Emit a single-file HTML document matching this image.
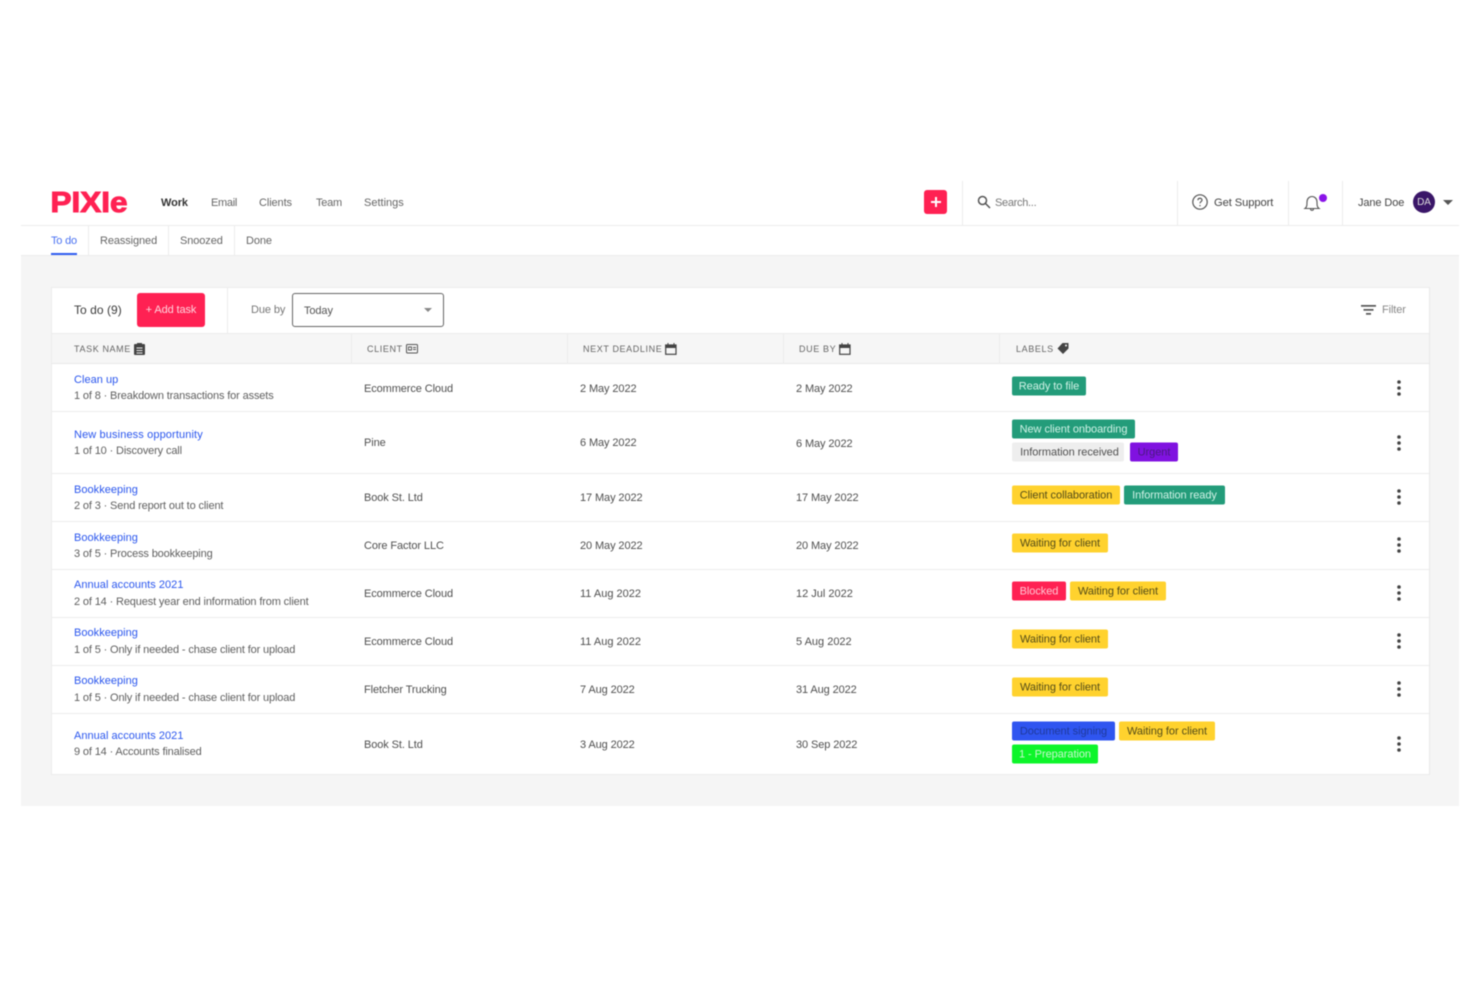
<!DOCTYPE html>
<html><head><meta charset="utf-8"><style>
html,body{margin:0;padding:0;background:#fff}
#p{position:relative;width:1480px;height:987px;overflow:hidden;background:#fff;font-family:"Liberation Sans",sans-serif;font-size:11px;letter-spacing:-.1px;color:#4f4f4f;filter:blur(.45px)}
.a{position:absolute}
.t{position:absolute;white-space:nowrap;transform:translateY(calc(-50% + 1px));line-height:14px}
.l{color:#2a56ee;letter-spacing:.03px}
.s{color:#606060;letter-spacing:-.14px}
.h{font-size:9px;letter-spacing:.62px;color:#666}
.b{position:absolute;height:19px;line-height:21px;border-radius:2px;text-align:center;font-size:11px;letter-spacing:-.05px;white-space:nowrap;transform:translateY(-50%)}
.y{background:#ffd22e;color:#544c18}.g{background:#239c7a;color:#d0f2e6}
.ln{position:absolute;background:#ececec}
svg{position:absolute;overflow:visible}
</style></head><body><div id="p">
<div class="a" style="left:21px;top:256px;width:1438px;height:550px;background:#f5f5f5"></div>
<div class="ln" style="left:21px;top:225px;width:1438px;height:1px"></div>
<div class="ln" style="left:21px;top:255px;width:1438px;height:1px"></div>
<svg style="left:48px;top:184px" width="84" height="36"><text x="2.500" y="28" font-family="Liberation Sans" font-weight="700" font-size="29" fill="#ff2153" textLength="77" lengthAdjust="spacingAndGlyphs" stroke="#ff2153" stroke-width="1" letter-spacing="0">PIXIe</text></svg>
<span class="t" style="left:161px;top:202px;font-weight:700;color:#333">Work</span>
<span class="t" style="left:211px;top:202px;color:#666;letter-spacing:-.3px">Email</span>
<span class="t" style="left:259px;top:202px;color:#666">Clients</span>
<span class="t" style="left:316px;top:202px;color:#666;letter-spacing:-.25px">Team</span>
<span class="t" style="left:364px;top:202px;color:#666;letter-spacing:0">Settings</span>
<div class="a" style="left:924px;top:190px;width:23px;height:24px;background:#ff2153;border-radius:3px"></div>
<div class="a" style="left:931px;top:201px;width:10px;height:2px;background:#fff"></div>
<div class="a" style="left:935px;top:197px;width:2px;height:10px;background:#fff"></div>
<div class="ln" style="left:962px;top:181px;width:1px;height:44px"></div>
<svg style="left:977px;top:195px" width="14" height="14" fill="none" stroke="#555" stroke-width="1.5"><circle cx="5.5" cy="5.5" r="4"/><path d="M8.500 8.500L13 13"/></svg>
<span class="t" style="left:995px;top:202px;color:#777;letter-spacing:-.3px">Search...</span>
<div class="ln" style="left:1177px;top:181px;width:1px;height:44px"></div>
<svg style="left:1192px;top:194px" width="16" height="16" fill="none" stroke="#555" stroke-width="1.2"><circle cx="8" cy="8" r="7.200"/><path d="M5.900 6.200C6 3.600 10 3.600 10 6.100C10 7.600 8 7.600 8 9.400M8 11v1.300"/></svg>
<span class="t" style="left:1214px;top:202px;color:#444;font-size:11.2px">Get Support</span>
<div class="ln" style="left:1288px;top:181px;width:1px;height:44px"></div>
<svg style="left:1304px;top:195px" width="17" height="17" fill="none" stroke="#555" stroke-width="1.100"><path d="M1 13.500C3 12 3 10 3 7C3 3.500 5.500 1.500 8 1.500C10.500 1.500 13 3.500 13 7C13 10 13 12 15 13.500ZM6.500 13.500C6.500 16 9.500 16 9.500 13.500"/></svg>
<div class="a" style="left:1319px;top:194px;width:8px;height:8px;border-radius:50%;background:#8a14e8"></div>
<div class="ln" style="left:1342px;top:181px;width:1px;height:44px"></div>
<span class="t" style="left:1358px;top:202px;color:#444;font-size:11px">Jane Doe</span>
<div class="a" style="left:1413px;top:191px;width:22px;height:22px;border-radius:50%;background:#3a1668;color:#ddd;font-size:10px;line-height:23px;text-align:center">DA</div>
<div class="a" style="left:1443px;top:200px;width:0;height:0;border:5px solid transparent;border-top:5px solid #555;border-bottom:0"></div>

<span class="t" style="left:51px;top:240px;color:#4a72f2;letter-spacing:-.2px">To do</span>
<div class="a" style="left:51px;top:253px;width:26px;height:2px;background:#2f5cf0"></div>
<div class="ln" style="left:88px;top:226px;width:1px;height:29px"></div>
<span class="t" style="left:100px;top:240px;color:#666">Reassigned</span>
<div class="ln" style="left:168px;top:226px;width:1px;height:29px"></div>
<span class="t" style="left:180px;top:240px;color:#666">Snoozed</span>
<div class="ln" style="left:234px;top:226px;width:1px;height:29px"></div>
<span class="t" style="left:246px;top:240px;color:#666">Done</span>

<div class="a" style="left:51px;top:287px;width:1377px;height:486px;background:#fff;border:1px solid #ececec;border-right-color:#e8e8e8"></div>
<span class="t" style="left:74px;top:309px;font-size:12px;letter-spacing:.05px;color:#3c3c3c">To do (9)</span>
<div class="a" style="left:137px;top:293px;width:68px;height:34px;background:#ff2153;border-radius:3px;color:#ffd5de;line-height:35px;text-align:center;font-size:11px">+ Add task</div>
<div class="ln" style="left:227px;top:288px;width:1px;height:45px"></div>
<span class="t" style="left:251px;top:309px;color:#777">Due by</span>
<div class="a" style="left:292px;top:293px;width:150px;height:32px;border:1px solid #666;border-radius:3px;background:#fff"></div>
<span class="t" style="left:304px;top:310px;color:#555">Today</span>
<div class="a" style="left:424px;top:308px;width:0;height:0;border:4.500px solid transparent;border-top:4px solid #888;border-bottom:0"></div>
<svg style="left:1361px;top:305px" width="16" height="11" fill="#555"><rect width="15" height="1.700" y="0"/><rect x="2.500" width="10" height="1.700" y="4"/><rect x="5" width="5" height="1.700" y="8"/></svg>
<span class="t" style="left:1382px;top:309px;color:#888">Filter</span>

<div class="a" style="left:52px;top:333px;width:1377px;height:31px;background:#f6f6f6;border-top:1px solid #ececec;box-sizing:border-box;border-bottom:1px solid #e8e8e8"></div>
<div class="ln" style="left:351px;top:334px;width:1px;height:30px"></div>
<div class="ln" style="left:567px;top:334px;width:1px;height:30px"></div>
<div class="ln" style="left:783px;top:334px;width:1px;height:30px"></div>
<div class="ln" style="left:999px;top:334px;width:1px;height:30px"></div>
<span class="t h" style="left:74px;top:348px">TASK NAME</span>
<svg style="left:134px;top:343px" width="11" height="12"><rect x="0" y="1" width="11" height="11" rx="1" fill="#444"/><rect x="3" y="0" width="5" height="2" fill="#444"/><path d="M2.500 5h6M2.500 7.500h6M2.500 10h6" stroke="#f0f0f0"/></svg>
<span class="t h" style="left:367px;top:348px">CLIENT</span>
<svg style="left:406px;top:344px" width="12" height="10" fill="none" stroke="#555"><rect x=".5" y=".5" width="11" height="8.500" rx="1"/><path d="M2.500 3h3v3h-3zM7 3.500h3M7 5.500h3" stroke-width=".9"/></svg>
<span class="t h" style="left:583px;top:348px">NEXT DEADLINE</span>
<svg style="left:665px;top:343px" width="12" height="12" fill="none" stroke="#444"><rect x=".7" y="2" width="10.300" height="9.300" stroke-width="1.200"/><rect x=".7" y="2" width="10.300" height="2.500" fill="#444"/><path d="M3 0v2M9 0v2"/></svg>
<span class="t h" style="left:799px;top:348px">DUE BY</span>
<svg style="left:839px;top:343px" width="12" height="12" fill="none" stroke="#444"><rect x=".7" y="2" width="10.300" height="9.300" stroke-width="1.200"/><rect x=".7" y="2" width="10.300" height="2.500" fill="#444"/><path d="M3 0v2M9 0v2"/></svg>
<span class="t h" style="left:1016px;top:348px">LABELS</span>
<svg style="left:1057px;top:342px" width="12" height="12"><path d="M5.500 1L11.500 1V6.500L6 12L.5 6.500Z" fill="#444"/><circle cx="9" cy="3.500" r="1" fill="#f6f6f6"/></svg>

<div class="ln" style="left:52px;top:411px;width:1377px;height:1px"></div>
<div class="ln" style="left:52px;top:473px;width:1377px;height:1px"></div>
<div class="ln" style="left:52px;top:521px;width:1377px;height:1px"></div>
<div class="ln" style="left:52px;top:569px;width:1377px;height:1px"></div>
<div class="ln" style="left:52px;top:617px;width:1377px;height:1px"></div>
<div class="ln" style="left:52px;top:665px;width:1377px;height:1px"></div>
<div class="ln" style="left:52px;top:713px;width:1377px;height:1px"></div>

<span class="t l" style="left:74px;top:379px">Clean up</span><span class="t s" style="left:74px;top:395px">1 of 8 · Breakdown transactions for assets</span>
<span class="t" style="left:364px;top:387.500px">Ecommerce Cloud</span><span class="t" style="left:580px;top:387.500px">2 May 2022</span><span class="t" style="left:796px;top:387.500px">2 May 2022</span>
<div class="b g" style="left:1012px;top:386px;width:74px">Ready to file</div>

<span class="t l" style="left:74px;top:434px;letter-spacing:.12px">New business opportunity</span><span class="t s" style="left:74px;top:450px">1 of 10 · Discovery call</span>
<span class="t" style="left:364px;top:441.500px">Pine</span><span class="t" style="left:580px;top:441.500px">6 May 2022</span><span class="t" style="left:796px;top:442.500px">6 May 2022</span>
<div class="b g" style="left:1012px;top:429px;width:123px">New client onboarding</div>
<div class="b" style="left:1012px;top:452px;width:112px;background:#eee;color:#505050;text-indent:3px">Information received</div>
<div class="b" style="left:1130px;top:452px;width:48px;background:#8012e0;color:#4a1a80">Urgent</div>

<span class="t l" style="left:74px;top:489px">Bookkeeping</span><span class="t s" style="left:74px;top:505px">2 of 3 · Send report out to client</span>
<span class="t" style="left:364px;top:496.500px">Book St. Ltd</span><span class="t" style="left:580px;top:496.500px">17 May 2022</span><span class="t" style="left:796px;top:496.500px">17 May 2022</span>
<div class="b y" style="left:1012px;top:495px;width:108px">Client collaboration</div>
<div class="b g" style="left:1124px;top:495px;width:101px">Information ready</div>

<span class="t l" style="left:74px;top:537px">Bookkeeping</span><span class="t s" style="left:74px;top:553px">3 of 5 · Process bookkeeping</span>
<span class="t" style="left:364px;top:544.500px">Core Factor LLC</span><span class="t" style="left:580px;top:544.500px">20 May 2022</span><span class="t" style="left:796px;top:544.500px">20 May 2022</span>
<div class="b y" style="left:1012px;top:543px;width:96px">Waiting for client</div>

<span class="t l" style="left:74px;top:584px">Annual accounts 2021</span><span class="t s" style="left:74px;top:601px">2 of 14 · Request year end information from client</span>
<span class="t" style="left:364px;top:592.500px">Ecommerce Cloud</span><span class="t" style="left:580px;top:592.500px;letter-spacing:0">11 Aug 2022</span><span class="t" style="left:796px;top:592.500px;letter-spacing:0">12 Jul 2022</span>
<div class="b" style="left:1012px;top:591px;width:54px;background:#ff2153;color:#ffc4d2">Blocked</div>
<div class="b y" style="left:1070px;top:591px;width:96px">Waiting for client</div>

<span class="t l" style="left:74px;top:632px">Bookkeeping</span><span class="t s" style="left:74px;top:649px">1 of 5 · Only if needed - chase client for upload</span>
<span class="t" style="left:364px;top:640.500px">Ecommerce Cloud</span><span class="t" style="left:580px;top:640.500px;letter-spacing:0">11 Aug 2022</span><span class="t" style="left:796px;top:640.500px;letter-spacing:0">5 Aug 2022</span>
<div class="b y" style="left:1012px;top:639px;width:96px">Waiting for client</div>

<span class="t l" style="left:74px;top:680px">Bookkeeping</span><span class="t s" style="left:74px;top:697px">1 of 5 · Only if needed - chase client for upload</span>
<span class="t" style="left:364px;top:688.500px">Fletcher Trucking</span><span class="t" style="left:580px;top:688.500px">7 Aug 2022</span><span class="t" style="left:796px;top:688.500px">31 Aug 2022</span>
<div class="b y" style="left:1012px;top:687px;width:96px">Waiting for client</div>

<span class="t l" style="left:74px;top:735px">Annual accounts 2021</span><span class="t s" style="left:74px;top:751px">9 of 14 · Accounts finalised</span>
<span class="t" style="left:364px;top:743.500px">Book St. Ltd</span><span class="t" style="left:580px;top:743.500px">3 Aug 2022</span><span class="t" style="left:796px;top:743.500px">30 Sep 2022</span>
<div class="b" style="left:1012px;top:731px;width:103px;background:#2f55f0;color:#1f3a9c">Document signing</div>
<div class="b y" style="left:1119px;top:731px;width:96px">Waiting for client</div>
<div class="b" style="left:1012px;top:754px;width:86px;background:#0df52a;color:#c8f7cf">1 - Preparation</div>

<svg style="left:1396px;top:380px" width="6" height="372" fill="#444">
<g id="d"><circle cx="3" cy="2" r="1.800"/><circle cx="3" cy="8" r="1.800"/><circle cx="3" cy="14" r="1.800"/></g>
<use href="#d" y="55"/><use href="#d" y="109"/><use href="#d" y="157"/><use href="#d" y="205"/><use href="#d" y="253"/><use href="#d" y="301"/><use href="#d" y="356"/>
</svg>
</div></body></html>
